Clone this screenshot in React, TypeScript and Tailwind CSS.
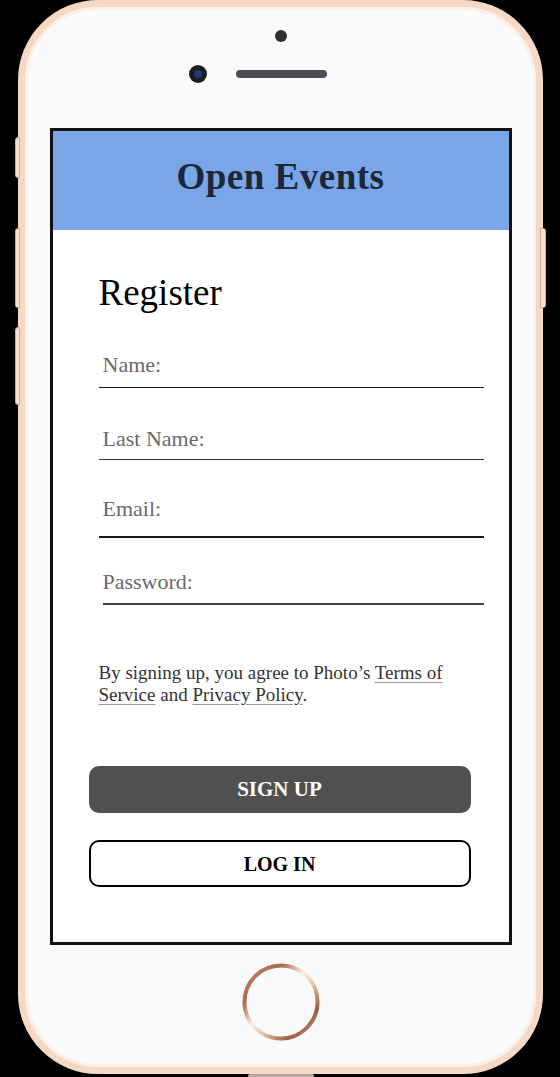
import React from 'react';

const serif = "font-['Liberation_Serif','Times_New_Roman',serif]";

const Field = ({ label, className, lineClass }: { label: string; className: string; lineClass: string }) => (
  <div className={`${className} ${lineClass}`}>
    <div className="h-[26px] pl-[4px] text-[22px] leading-[26px] text-[#6a6a6a]">{label}</div>
  </div>
);

const HomeButton = () => (
  <svg width="78" height="78" viewBox="0 0 78 78">
    <defs>
      <linearGradient id="copper" x1="0" y1="0" x2="1" y2="1">
        <stop offset="0" stopColor="#c98c68" />
        <stop offset="0.25" stopColor="#a9694a" />
        <stop offset="0.45" stopColor="#fbefe7" />
        <stop offset="0.6" stopColor="#e9c2a8" />
        <stop offset="0.8" stopColor="#9a5f43" />
        <stop offset="1" stopColor="#d7a286" />
      </linearGradient>
    </defs>
    <circle cx="39" cy="39" r="36.5" fill="#f9fafc" stroke="url(#copper)" strokeWidth="4" />
  </svg>
);

export default function App() {
  return (
    <div className={`relative w-[560px] h-[1077px] overflow-hidden bg-black ${serif}`}>
      {/* side buttons */}
      <div className="absolute left-[15px] top-[137px] w-[5px] h-[41px] rounded-l-[3px] border border-[#d9a98c] bg-[#f8e0d0]" />
      <div className="absolute left-[15px] top-[228px] w-[5px] h-[80px] rounded-l-[3px] border border-[#d9a98c] bg-[#f8e0d0]" />
      <div className="absolute left-[15px] top-[327px] w-[5px] h-[78px] rounded-l-[3px] border border-[#d9a98c] bg-[#f8e0d0]" />
      <div className="absolute left-[540px] top-[228px] w-[6px] h-[80px] rounded-r-[3px] border border-[#d9a98c] bg-[#f8e0d0]" />
      <div className="absolute left-[248px] top-[1074px] w-[66px] h-[3px] rounded-t-[2px] bg-[#b7aaa2]" />

      <div className="ml-[18px] w-[525px] h-[1074px] rounded-[80px] border-[7px] border-[#f6d9c5] bg-[#f9fafc] shadow-[inset_0_0_0_3px_#fcefe6] flex flex-col items-center">
        {/* top sensors */}
        <div className="w-full flex flex-col items-center">
          <div className="mt-[23px] w-[12px] h-[12px] rounded-full bg-[#2f2f33]" />
          <div className="mt-[23px] w-full flex items-center pl-[164px] gap-[29px]">
            <div className="w-[18px] h-[18px] rounded-full bg-[#1c1c20] flex items-center justify-center">
              <div className="w-[8px] h-[8px] rounded-full bg-[#1d3a78]" />
            </div>
            <div className="w-[91px] h-[8px] rounded-full bg-[#4e4e52]" />
          </div>
        </div>

        {/* screen */}
        <div className="mt-[45px] w-[462px] h-[817px] border-[3px] border-[#111] bg-white flex flex-col">
          <div className="h-[99px] bg-[#79a6e9] flex items-center justify-center pb-[8px]">
            <h1 className="text-[37px] font-bold text-[#1d2737] tracking-[0.5px]">Open Events</h1>
          </div>

          <div className="pl-[46px] pr-[25px]">
            <h2 className="mt-[43px] text-[37px] leading-[40px] text-black">Register</h2>
            <Field label="Name:" className="mt-[39px] pb-[9px]" lineClass="border-b border-[#1a1a1a]" />
            <Field label="Last Name:" className="mt-[38px] pb-[7px]" lineClass="border-b border-[#333]" />
            <Field label="Email:" className="mt-[36px] pb-[14px]" lineClass="border-b-[2px] border-[#1a1a1a]" />
            <Field label="Password:" className="mt-[31px] pb-[8px] ml-[4px] [&>div]:pl-0" lineClass="border-b-[2px] border-[#444]" />
            <p className="mt-[57px] text-[19px] leading-[22px] text-[#333]">
              By signing up, you agree to Photo’s{' '}
              <span className="underline decoration-[#999] underline-offset-[3px]">Terms of</span>
              <br />
              <span className="underline decoration-[#999] underline-offset-[3px]">Service</span> and{' '}
              <span className="underline decoration-[#999] underline-offset-[3px]">Privacy Policy</span>.
            </p>
          </div>

          <div className="pl-[36px] flex flex-col">
            <button className="mt-[60px] w-[382px] h-[47px] rounded-[10px] bg-[#505050] text-white text-[21px] font-bold">
              SIGN UP
            </button>
            <button className="mt-[27px] w-[382px] h-[47px] rounded-[10px] border-2 border-black bg-white text-black text-[20px] font-bold">
              LOG IN
            </button>
          </div>
        </div>

        <div className="mt-[18px]">
          <HomeButton />
        </div>
      </div>
    </div>
  );
}
